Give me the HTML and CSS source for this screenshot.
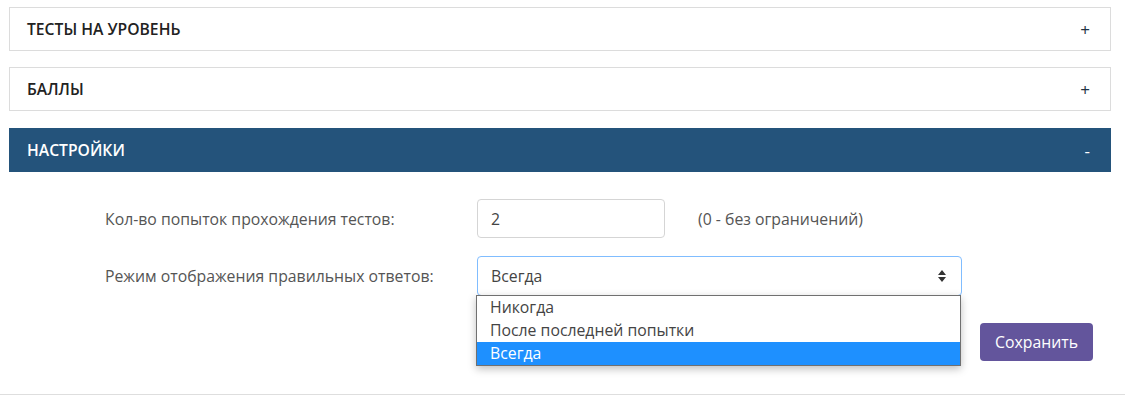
FILE: index.html
```html
<!DOCTYPE html>
<html lang="ru">
<head>
    <meta charset="UTF-8">
    <meta name="viewport" content="width=device-width, initial-scale=1.0">
    <title>Настройки теста</title>
    <link rel="stylesheet" href="styles.css">
</head>
<body>
    <div class="panels">
        <div class="panel">
            <div class="panel-head">
                <span>Тесты на уровень</span>
                <span class="toggle">+</span>
            </div>
        </div>

        <div class="panel">
            <div class="panel-head">
                <span>Баллы</span>
                <span class="toggle">+</span>
            </div>
        </div>

        <div class="panel panel-open">
            <div class="panel-head">
                <span>Настройки</span>
                <span class="toggle">-</span>
            </div>
        </div>
    </div>

    <div class="settings">
        <div class="form-row">
            <label class="form-label" for="attempts">Кол-во попыток прохождения тестов:</label>
            <input class="form-input" type="text" id="attempts" value="2">
            <span class="hint">(0 - без ограничений)</span>
        </div>

        <div class="form-row">
            <label class="form-label">Режим отображения правильных ответов:</label>
            <div class="select-wrap">
                <div class="select">
                    <span>Всегда</span>
                    <svg class="select-arrow" width="10" height="14" viewBox="0 0 10 14">
                        <path d="M5 1 L9 6 L1 6 Z M5 13 L9 8 L1 8 Z" fill="#333"/>
                    </svg>
                </div>
                <ul class="select-list">
                    <li>Никогда</li>
                    <li>После последней попытки</li>
                    <li class="selected">Всегда</li>
                </ul>
            </div>
        </div>

        <div class="form-actions">
            <button class="btn-save">Сохранить</button>
        </div>
    </div>
</body>
</html>
```

FILE: styles.css
```css
body {
    margin: 0;
    padding: 0;
    font-family: "Open Sans", Arial, sans-serif;
    background-color: #fff;
    color: #555;
}

.panels {
    padding: 7px 14px 0 9px;
}

.panel {
    border: 1px solid #dcdcdc;
    margin-bottom: 16px;
    background: #fff;
}

.panel-head {
    display: flex;
    justify-content: space-between;
    align-items: center;
    height: 42px;
    padding: 0 20px 0 17px;
    font-size: 15.7px;
    font-weight: 600;
    text-transform: uppercase;
    color: #222;
}

.toggle {
    font-weight: 400;
    font-size: 17px;
    color: #234;
}

.panel-open {
    margin-top: 17px;
    margin-bottom: 0;
    border-color: #24537b;
    background-color: #24537b;
}

.panel-open .panel-head {
    color: #fff;
}

.panel-open .toggle {
    color: #fff;
}

.settings {
    padding: 27px 32px 33px 105px;
    border-bottom: 1px solid #dedede;
}

.form-row {
    display: flex;
    align-items: center;
    margin-bottom: 18px;
}

.form-label {
    width: 372px;
    font-size: 15.8px;
    color: #555;
}

.form-input {
    width: 188px;
    height: 39px;
    box-sizing: border-box;
    padding: 0 13px;
    border: 1px solid #d5d5d5;
    border-radius: 4px;
    font-family: inherit;
    font-size: 15.8px;
    color: #444;
}

.hint {
    margin-left: 33px;
    font-size: 15.8px;
    color: #555;
}

.select-wrap {
    position: relative;
}

.select {
    display: flex;
    justify-content: space-between;
    align-items: center;
    width: 485px;
    height: 40px;
    box-sizing: border-box;
    padding: 0 14px 0 13px;
    border: 1px solid #80bdff;
    border-radius: 4px;
    font-size: 15.8px;
    color: #444;
}

.select-list {
    position: absolute;
    top: 39px;
    left: -1px;
    width: 485px;
    margin: 0;
    padding: 0;
    list-style: none;
    box-sizing: border-box;
    border: 1px solid #707070;
    background: #fff;
    box-shadow: 0 3px 8px rgba(0, 0, 0, 0.25);
    font-size: 15.8px;
    color: #444;
}

.select-list li {
    height: 23px;
    line-height: 23px;
    padding: 0 13px;
}

.select-list .selected {
    background-color: #1e90ff;
    color: #fff;
}

.form-actions {
    display: flex;
    justify-content: flex-end;
    margin-top: 27px;
}

.btn-save {
    height: 38px;
    padding: 0 15px;
    border: none;
    border-radius: 4px;
    background-color: #63559c;
    color: #fff;
    font-family: inherit;
    font-size: 15.8px;
}
```
